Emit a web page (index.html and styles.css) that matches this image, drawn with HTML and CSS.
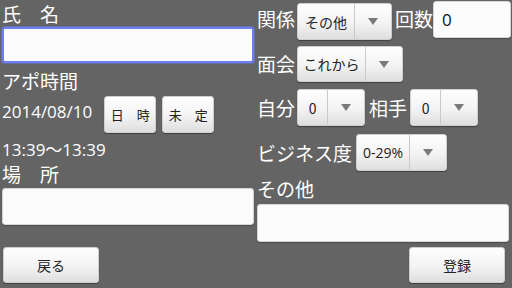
FILE: index.html
```html
<!DOCTYPE html>
<html lang="ja">
<head>
<meta charset="utf-8">
<link rel="stylesheet" href="styles.css">
</head>
<body>
<div class="screen">
  <div class="col left">
    <div class="label l-name">氏　名</div>
    <div class="input focused"></div>
    <div class="label l-appo">アポ時間</div>
    <div class="date-row">
      <span class="value date">2014/08/10</span>
      <div class="btn small">日　時</div>
      <div class="btn small">未　定</div>
    </div>
    <div class="value time">13:39～13:39</div>
    <div class="label l-place">場　所</div>
    <div class="input place"></div>
    <div class="btn wide back">戻る</div>
  </div>
  <div class="col right">
    <div class="row r1">
      <span class="label inline l-rel">関係</span>
      <div class="select s-rel"><span class="val">その他</span><span class="arrow"><i></i></span></div>
      <span class="label inline l-count">回数</span>
      <div class="input count"><span class="num">0</span></div>
    </div>
    <div class="row r2">
      <span class="label inline">面会</span>
      <div class="select s-meet"><span class="val">これから</span><span class="arrow"><i></i></span></div>
    </div>
    <div class="row r3">
      <span class="label inline">自分</span>
      <div class="select s-num"><span class="val">0</span><span class="arrow"><i></i></span></div>
      <span class="label inline l-other">相手</span>
      <div class="select s-num"><span class="val">0</span><span class="arrow"><i></i></span></div>
    </div>
    <div class="row r4">
      <span class="label inline l-biz">ビジネス度</span>
      <div class="select s-biz"><span class="val pct">0-29%</span><span class="arrow"><i></i></span></div>
    </div>
    <div class="label l-etc">その他</div>
    <div class="input etc"></div>
    <div class="btn wide submit">登録</div>
  </div>
</div>
</body>
</html>
```

FILE: styles.css
```css
html, body {
  margin: 0;
  padding: 0;
  background: #646464;
}
body {
  width: 512px;
  height: 288px;
  overflow: hidden;
  font-family: "Open Sans", "Noto Sans CJK JP", sans-serif;
  color: #ffffff;
}
.screen {
  display: flex;
  width: 512px;
  height: 288px;
}
.col {
  display: flex;
  flex-direction: column;
  width: 256px;
  box-sizing: border-box;
}
.left {
  padding-left: 2px;
  padding-right: 2px;
}
.right {
  padding-left: 1px;
}
.label {
  font-family: "Noto Sans CJK JP", sans-serif;
  font-size: 19px;
  line-height: 24px;
  color: #ffffff;
  white-space: nowrap;
}
.label.l-name { line-height: 27px; }
.l-appo { margin-top: 6px; }
.l-place { margin-top: 0; }
.value {
  font-size: 17px;
  line-height: 24px;
  color: #ffffff;
  white-space: nowrap;
}
.input {
  box-sizing: border-box;
  background: #fbfbfb;
  border: 1px solid #d6d6d6;
  border-radius: 3px;
  box-shadow: 0 1px 1px rgba(0, 0, 0, 0.25);
}
.input.focused {
  height: 36px;
  border: 2px solid #6e7ef6;
  box-shadow: 0 0 1px 1px rgba(110, 126, 246, 0.5);
}
.date-row {
  display: flex;
  align-items: center;
  height: 37px;
  margin-top: 3px;
}
.date {
  margin-right: 12px;
  padding-bottom: 6px;
}
.btn {
  box-sizing: border-box;
  display: flex;
  align-items: center;
  justify-content: center;
  background: linear-gradient(#fefefe, #f3f3f3 55%, #dedede);
  border: 1px solid #cfcfcf;
  border-radius: 3px;
  box-shadow: 0 1px 1px rgba(0, 0, 0, 0.35);
  color: #222222;
  font-family: "Noto Sans CJK JP", sans-serif;
  white-space: nowrap;
}
.btn.small {
  width: 52px;
  height: 37px;
  font-size: 13px;
  margin-right: 6px;
}
.time {
  margin-top: 5px;
}
.input.place {
  height: 37px;
  margin-top: 2px;
}
.btn.wide {
  width: 96px;
  height: 36px;
  font-size: 14px;
}
.back {
  margin-top: 22px;
  margin-left: 1px;
}
.row {
  display: flex;
  align-items: center;
}
.r1 {
  align-items: flex-start;
  height: 41px;
}
.r1 .label.inline {
  margin-top: 7px;
}
.label.inline {
  margin-right: 2px;
}
.s-rel { margin-top: 3px; }
.label.inline.l-count { margin-left: 3px; margin-right: 0; }
.input.count {
  width: 78px;
  height: 37px;
  margin-top: 1px;
  display: flex;
  align-items: center;
  padding-left: 8px;
}
.num {
  font-size: 17px;
  color: #111111;
}
.r2 { margin-top: 5px; height: 36px; }
.r3 { margin-top: 7px; height: 37px; }
.r4 { margin-top: 8px; height: 37px; }
.label.inline.l-other { margin-left: 4px; margin-right: 3px; }
.label.inline.l-biz { margin-right: 4px; }
.select {
  box-sizing: border-box;
  display: flex;
  height: 37px;
  background: linear-gradient(#fefefe, #f3f3f3 55%, #dedede);
  border: 1px solid #cfcfcf;
  border-radius: 3px;
  box-shadow: 0 1px 1px rgba(0, 0, 0, 0.35);
  color: #222222;
}
.select .val {
  flex: 1;
  display: flex;
  align-items: center;
  justify-content: center;
  font-family: "Noto Sans CJK JP", sans-serif;
  font-size: 14px;
  white-space: nowrap;
}
.select .val.pct {
  font-family: "Open Sans", sans-serif;
  font-size: 14px;
}
.select .arrow {
  width: 36px;
  flex: none;
  display: flex;
  align-items: center;
  justify-content: center;
  border-left: 1px solid #c9c9c9;
}
.select .arrow i {
  width: 0;
  height: 0;
  border-left: 5px solid transparent;
  border-right: 5px solid transparent;
  border-top: 7px solid #7b7b7b;
}
.s-rel { width: 95px; }
.s-meet { width: 106px; height: 36px; }
.s-num { width: 68px; }
.s-biz { width: 91px; }
.l-etc { margin-top: 6px; }
.input.etc {
  width: 252px;
  height: 38px;
  margin-top: 3px;
}
.submit {
  align-self: flex-end;
  margin-top: 5px;
  margin-right: 7px;
}
```
